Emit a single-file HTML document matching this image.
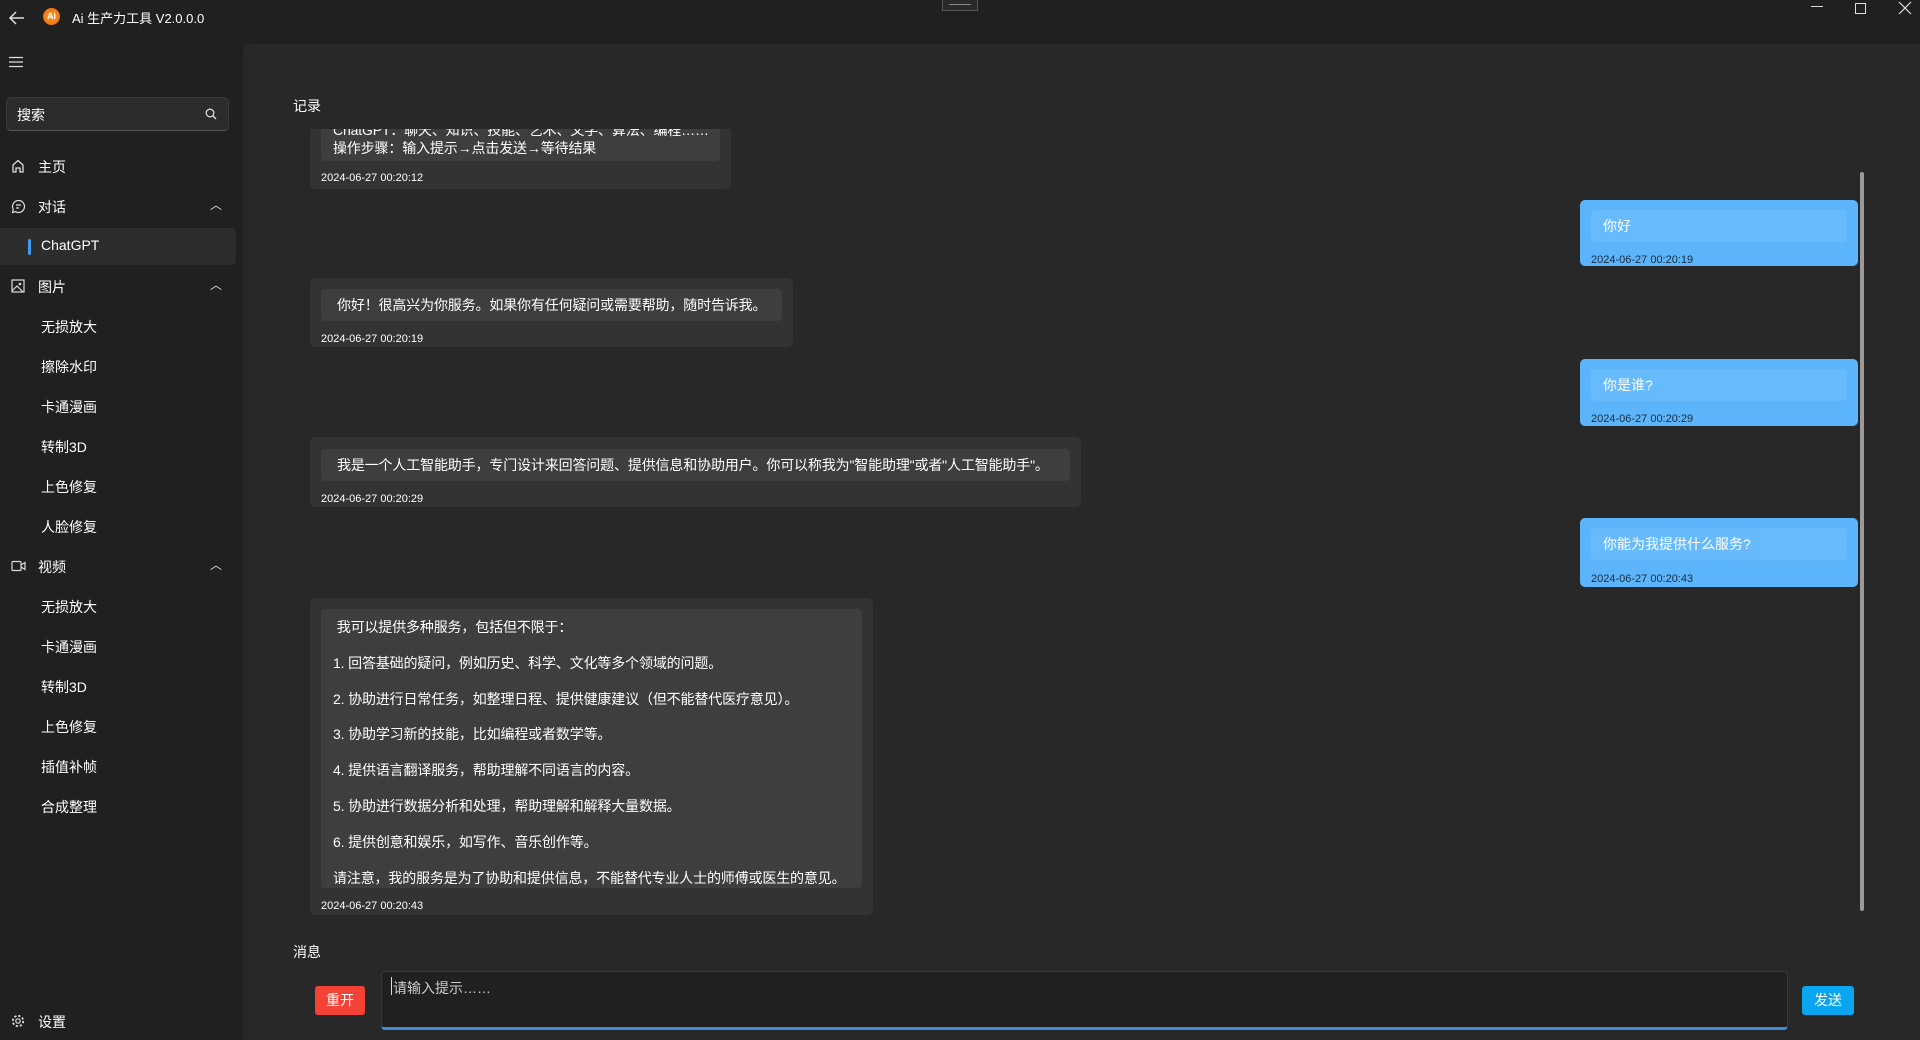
<!DOCTYPE html>
<html><head><meta charset="utf-8"><style>
*{margin:0;padding:0;box-sizing:border-box}
body{width:1920px;height:1040px;background:#202020;font-family:"Liberation Sans","Noto Sans CJK SC",sans-serif;color:#fff;position:relative;overflow:hidden;font-size:14px}
.a{position:absolute;white-space:nowrap}
.nav{position:absolute;left:38px;font-size:14px;color:#fff}
.sub{position:absolute;left:41px;font-size:14px;color:#fff}
.ico{position:absolute;left:11px}
.chev{position:absolute;left:210px;font-size:12px;color:#ddd}
#main{position:absolute;left:243px;top:44px;width:1677px;height:996px;background:#282828;border-top-left-radius:8px}
.lb{position:absolute;left:310px;background:#333;border-radius:5px}
.lb .in{position:absolute;left:11px;right:11px;background:#3e3e3e;border-radius:4px;font-size:14px;color:#fff;padding:0 16px;white-space:nowrap;letter-spacing:-0.15px}
.ts{position:absolute;left:11px;font-size:11px;color:#fff;white-space:nowrap}
.rb{position:absolute;left:1580px;width:278px;background:#5cb5fb;border-radius:5px}
.rb .in{position:absolute;left:11px;right:11px;top:10px;height:32px;background:#67bbfd;border-radius:4px;font-size:14px;color:#fff;padding:0 12px;line-height:32px;white-space:nowrap}
.rb .ts{color:#1a2a3a;top:54px}
</style></head><body>
<svg class="a" style="left:8px;top:10px" width="18" height="16" viewBox="0 0 18 16"><path d="M16 8H3M8 2L2 8l6 6" fill="none" stroke="#ddd" stroke-width="1.5"/></svg>
<div class="a" style="left:43px;top:8px;width:17px;height:17px;border-radius:50%;background:radial-gradient(#ffa030,#e85e00);font-size:9px;font-weight:bold;line-height:17px;text-align:center;color:#fff">Ai</div>
<div class="a" style="left:72px;top:8px;font-size:13px">Ai 生产力工具 V2.0.0.0</div>
<div class="a" style="left:942px;top:0;width:36px;height:11px;border:1px solid #555;border-top:none;background:#2a2a2a"><div style="margin:4px 6px;height:1px;background:#888"></div></div>
<div class="a" style="left:1811px;top:6px;width:12px;height:1px;background:#ddd"></div>
<div class="a" style="left:1855px;top:3px;width:11px;height:11px;border:1px solid #ddd"></div>
<svg class="a" style="left:1898px;top:1px" width="14" height="14"><path d="M1 1L13 13M13 1L1 13" stroke="#ddd" stroke-width="1.2"/></svg>
<svg class="a" style="left:9px;top:56px" width="14" height="12"><path d="M0 1.5H14M0 6H14M0 10.5H14" stroke="#ddd" stroke-width="1.2"/></svg>
<div class="a" style="left:6px;top:97px;width:223px;height:34px;background:#2c2c2c;border:1px solid #3a3a3a;border-bottom-color:#555;border-radius:5px"></div>
<div class="a" style="left:17px;top:105px;font-size:14px">搜索</div>
<svg class="a" style="left:205px;top:108px" width="12" height="12"><circle cx="5" cy="5" r="3.8" fill="none" stroke="#ddd" stroke-width="1.3"/><path d="M8 8l3 3" stroke="#ddd" stroke-width="1.4"/></svg>

<svg class="ico" style="top:159px" width="14" height="14" viewBox="0 0 14 14"><path d="M2 13V6L7 1.5 12 6v7H9V9H5v4z" fill="none" stroke="#ddd" stroke-width="1.3"/></svg>
<div class="nav" style="top:157px">主页</div>
<svg class="ico" style="top:199px" width="15" height="15" viewBox="0 0 15 15"><path d="M7.5 1.5a6 6 0 1 1-3 11.2L1.5 13.5l.8-3A6 6 0 0 1 7.5 1.5z" fill="none" stroke="#ddd" stroke-width="1.2"/><path d="M5 6h5M5 9h3" stroke="#ddd" stroke-width="1.2"/></svg>
<div class="nav" style="top:197px">对话</div><div class="chev" style="top:196px">︿</div>
<div class="a" style="left:0;top:228px;width:236px;height:37px;background:#2d2d2d;border-radius:0 5px 5px 0"></div>
<div class="a" style="left:28px;top:239px;width:3px;height:16px;background:#3b9bf0;border-radius:2px"></div>
<div class="a" style="left:41px;top:237px;font-size:14px">ChatGPT</div>
<svg class="ico" style="top:279px" width="14" height="14" viewBox="0 0 14 14"><rect x="1" y="1" width="12" height="12" fill="none" stroke="#ddd" stroke-width="1.2"/><circle cx="9" cy="5" r="1.3" fill="#ddd"/><path d="M1 12l5-5 6 6" fill="none" stroke="#ddd" stroke-width="1.2"/></svg>
<div class="nav" style="top:277px">图片</div><div class="chev" style="top:276px">︿</div>
<div class="sub" style="top:317px">无损放大</div>
<div class="sub" style="top:357px">擦除水印</div>
<div class="sub" style="top:397px">卡通漫画</div>
<div class="sub" style="top:437px">转制3D</div>
<div class="sub" style="top:477px">上色修复</div>
<div class="sub" style="top:517px">人脸修复</div>
<svg class="ico" style="top:560px" width="15" height="12" viewBox="0 0 15 12"><rect x="1" y="1.5" width="9" height="9" rx="1" fill="none" stroke="#ddd" stroke-width="1.2"/><path d="M10 5l4-2.5v7L10 7" fill="none" stroke="#ddd" stroke-width="1.2"/></svg>
<div class="nav" style="top:557px">视频</div><div class="chev" style="top:556px">︿</div>
<div class="sub" style="top:597px">无损放大</div>
<div class="sub" style="top:637px">卡通漫画</div>
<div class="sub" style="top:677px">转制3D</div>
<div class="sub" style="top:717px">上色修复</div>
<div class="sub" style="top:757px">插值补帧</div>
<div class="sub" style="top:797px">合成整理</div>
<svg class="ico" style="top:1014px" width="14" height="14" viewBox="0 0 14 14"><circle cx="7" cy="7" r="2.2" fill="none" stroke="#ddd" stroke-width="1.2"/><circle cx="7" cy="7" r="5.2" fill="none" stroke="#ddd" stroke-width="1.8" stroke-dasharray="2.2 1.9"/></svg>
<div class="nav" style="top:1012px">设置</div>

<div id="main"></div>
<div class="a" style="left:293px;top:96px;font-size:14px">记录</div>

<div class="a" style="left:300px;top:129px;width:1560px;height:790px;overflow:hidden">
 <div class="lb" style="left:10px;top:-30px;width:421px;height:90px">
  <div class="in" style="top:8px;height:54px;line-height:18px;padding:14px 12px 0">ChatGPT：聊天、知识、技能、艺术、文学、算法、编程……<br>操作步骤：输入提示→点击发送→等待结果</div>
  <div class="ts" style="top:73px">2024-06-27 00:20:12</div>
 </div>
</div>
<div class="lb" style="top:278px;width:483px;height:69px">
 <div class="in" style="top:11px;height:32px;line-height:32px">你好！很高兴为你服务。如果你有任何疑问或需要帮助，随时告诉我。</div>
 <div class="ts" style="top:55px">2024-06-27 00:20:19</div>
</div>
<div class="lb" style="top:437px;width:771px;height:70px">
 <div class="in" style="top:12px;height:32px;line-height:32px">我是一个人工智能助手，专门设计来回答问题、提供信息和协助用户。你可以称我为"智能助理"或者"人工智能助手"。</div>
 <div class="ts" style="top:56px">2024-06-27 00:20:29</div>
</div>
<div class="lb" style="top:598px;width:563px;height:317px">
 <div class="in" style="top:11px;height:279px;padding:1px 12px 0;line-height:35.8px">&nbsp;我可以提供多种服务，包括但不限于：<br>1. 回答基础的疑问，例如历史、科学、文化等多个领域的问题。<br>2. 协助进行日常任务，如整理日程、提供健康建议（但不能替代医疗意见）。<br>3. 协助学习新的技能，比如编程或者数学等。<br>4. 提供语言翻译服务，帮助理解不同语言的内容。<br>5. 协助进行数据分析和处理，帮助理解和解释大量数据。<br>6. 提供创意和娱乐，如写作、音乐创作等。<br>请注意，我的服务是为了协助和提供信息，不能替代专业人士的师傅或医生的意见。</div>
 <div class="ts" style="top:302px">2024-06-27 00:20:43</div>
</div>

<div class="rb" style="top:200px;height:66px"><div class="in">你好</div><div class="ts">2024-06-27 00:20:19</div></div>
<div class="rb" style="top:359px;height:67px"><div class="in">你是谁?</div><div class="ts">2024-06-27 00:20:29</div></div>
<div class="rb" style="top:518px;height:69px"><div class="in">你能为我提供什么服务?</div><div class="ts" style="top:55px">2024-06-27 00:20:43</div></div>

<div class="a" style="left:1860px;top:172px;width:4px;height:739px;background:#9a9a9a;border-radius:2px"></div>

<div class="a" style="left:293px;top:942px;font-size:14px">消息</div>
<div class="a" style="left:315px;top:986px;width:50px;height:29px;background:#f44336;border-radius:3px;text-align:center;line-height:29px;font-size:14px">重开</div>
<div class="a" style="left:381px;top:971px;width:1407px;height:59px;background:#202020;border:1px solid #3a3a3a;border-bottom:3px solid #3c8dd8;border-radius:4px"></div>
<div class="a" style="left:391px;top:977px;width:1px;height:18px;background:#ddd"></div>
<div class="a" style="left:393px;top:978px;font-size:14px;color:#ccc">请输入提示……</div>
<div class="a" style="left:1802px;top:986px;width:52px;height:29px;background:#0aa5f0;border-radius:3px;text-align:center;line-height:29px;font-size:14px">发送</div>
</body></html>
